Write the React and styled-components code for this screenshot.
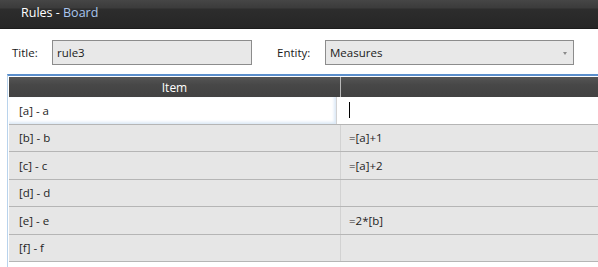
import React from "react";
import styled, { createGlobalStyle } from "styled-components";

const Global = createGlobalStyle`
  html, body {
    margin: 0;
    padding: 0;
    background: #ffffff;
    font-family: "Open Sans", "Noto Sans", sans-serif;
    overflow: hidden;
  }
`;

const Page = styled.div`
  width: 598px;
  height: 267px;
  display: flex;
  flex-direction: column;
  background: #ffffff;
`;

const TitleBar = styled.div`
  height: 29px;
  flex: none;
  display: flex;
  align-items: center;
  padding: 0 0 3px 21px;
  box-sizing: border-box;
  background: linear-gradient(#464646 0px, #3b3b3b 8px, #2d2d2d 9px, #262626 100%);
  border-bottom: 1px solid #1c1c1c;
  font-size: 12.5px;
  color: #ffffff;
`;

const Accent = styled.span`
  color: #a9c6ee;
`;

const FormRow = styled.div`
  display: flex;
  align-items: center;
  height: 26px;
  margin-top: 10px;
  padding-left: 12px;
  font-size: 11.5px;
  color: #1a1a1a;
`;

const Label = styled.span`
  width: ${(p) => p.$w}px;
  flex: none;
`;

const Field = styled.div`
  width: ${(p) => p.$w}px;
  height: 25px;
  flex: none;
  box-sizing: border-box;
  border: 1px solid #8c8c8c;
  background: #e8e8e8;
  display: flex;
  align-items: center;
  padding-left: 4px;
  position: relative;
  margin-right: ${(p) => p.$mr || 0}px;
`;

const Arrow = styled.span`
  position: absolute;
  right: 6px;
  top: 11px;
  width: 0;
  height: 0;
  border-left: 2.5px solid transparent;
  border-right: 2.5px solid transparent;
  border-top: 3px solid #8a8a8a;
`;

const Grid = styled.div`
  margin: 9px 0 0 7px;
  flex: 1;
  border-top: 2px solid #5b8fcc;
  border-left: 1px solid #b9d3ec;
  box-shadow: inset 1px 0 0 #ffffff;
  padding-left: 1px;
  overflow: hidden;
`;

const Header = styled.div`
  display: grid;
  grid-template-columns: 332px 1fr;
  height: 20px;
  margin-top: 1px;
  background: linear-gradient(#555555, #474747 40%, #424242);
  color: #ffffff;
  font-size: 12px;
`;

const HeadCell = styled.div`
  display: flex;
  align-items: center;
  justify-content: center;
  border-right: ${(p) => (p.$last ? "none" : "1px solid #b8b8b8")};
`;

const Row = styled.div`
  display: grid;
  grid-template-columns: 332px 1fr;
  height: 27.5px;
  box-sizing: border-box;
  border-bottom: 1px solid #b5b5b5;
  background: ${(p) => (p.$editing ? "#ffffff" : "#e6e6e6")};
  font-size: 11.5px;
  color: #1e1e1e;
`;

const Cell = styled.div`
  display: flex;
  align-items: center;
  padding-left: ${(p) => (p.$value ? 8 : 10)}px;
  border-right: ${(p) => (p.$value ? "none" : "1px solid #d2d2d2")};
  box-shadow: ${(p) => (p.$glow ? "inset 0 -3px 3px -1px #dde9f6, inset -3px 0 3px -1px #dde9f6" : "none")};
  margin-right: ${(p) => (p.$glow ? 4 : 0)}px;
`;

const Caret = styled.span`
  width: 1px;
  height: 16px;
  background: #000000;
`;

const rows = [
  { item: "[a] - a", value: null, editing: true },
  { item: "[b] - b", value: "=[a]+1" },
  { item: "[c] - c", value: "=[a]+2" },
  { item: "[d] - d", value: "" },
  { item: "[e] - e", value: "=2*[b]" },
  { item: "[f] - f", value: "" },
];

export default function App() {
  return (
    <Page>
      <Global />
      <TitleBar>
        Rules&nbsp;-&nbsp;<Accent>Board</Accent>
      </TitleBar>
      <FormRow>
        <Label $w={40}>Title:</Label>
        <Field $w={200} $mr={25}>rule3</Field>
        <Label $w={48}>Entity:</Label>
        <Field $w={249}>
          Measures
          <Arrow />
        </Field>
      </FormRow>
      <Grid>
        <Header>
          <HeadCell>Item</HeadCell>
          <HeadCell $last />
        </Header>
        {rows.map((r) => (
          <Row key={r.item} $editing={r.editing}>
            <Cell $glow={r.editing}>{r.item}</Cell>
            <Cell $value>{r.editing ? <Caret /> : r.value}</Cell>
          </Row>
        ))}
      </Grid>
    </Page>
  );
}
